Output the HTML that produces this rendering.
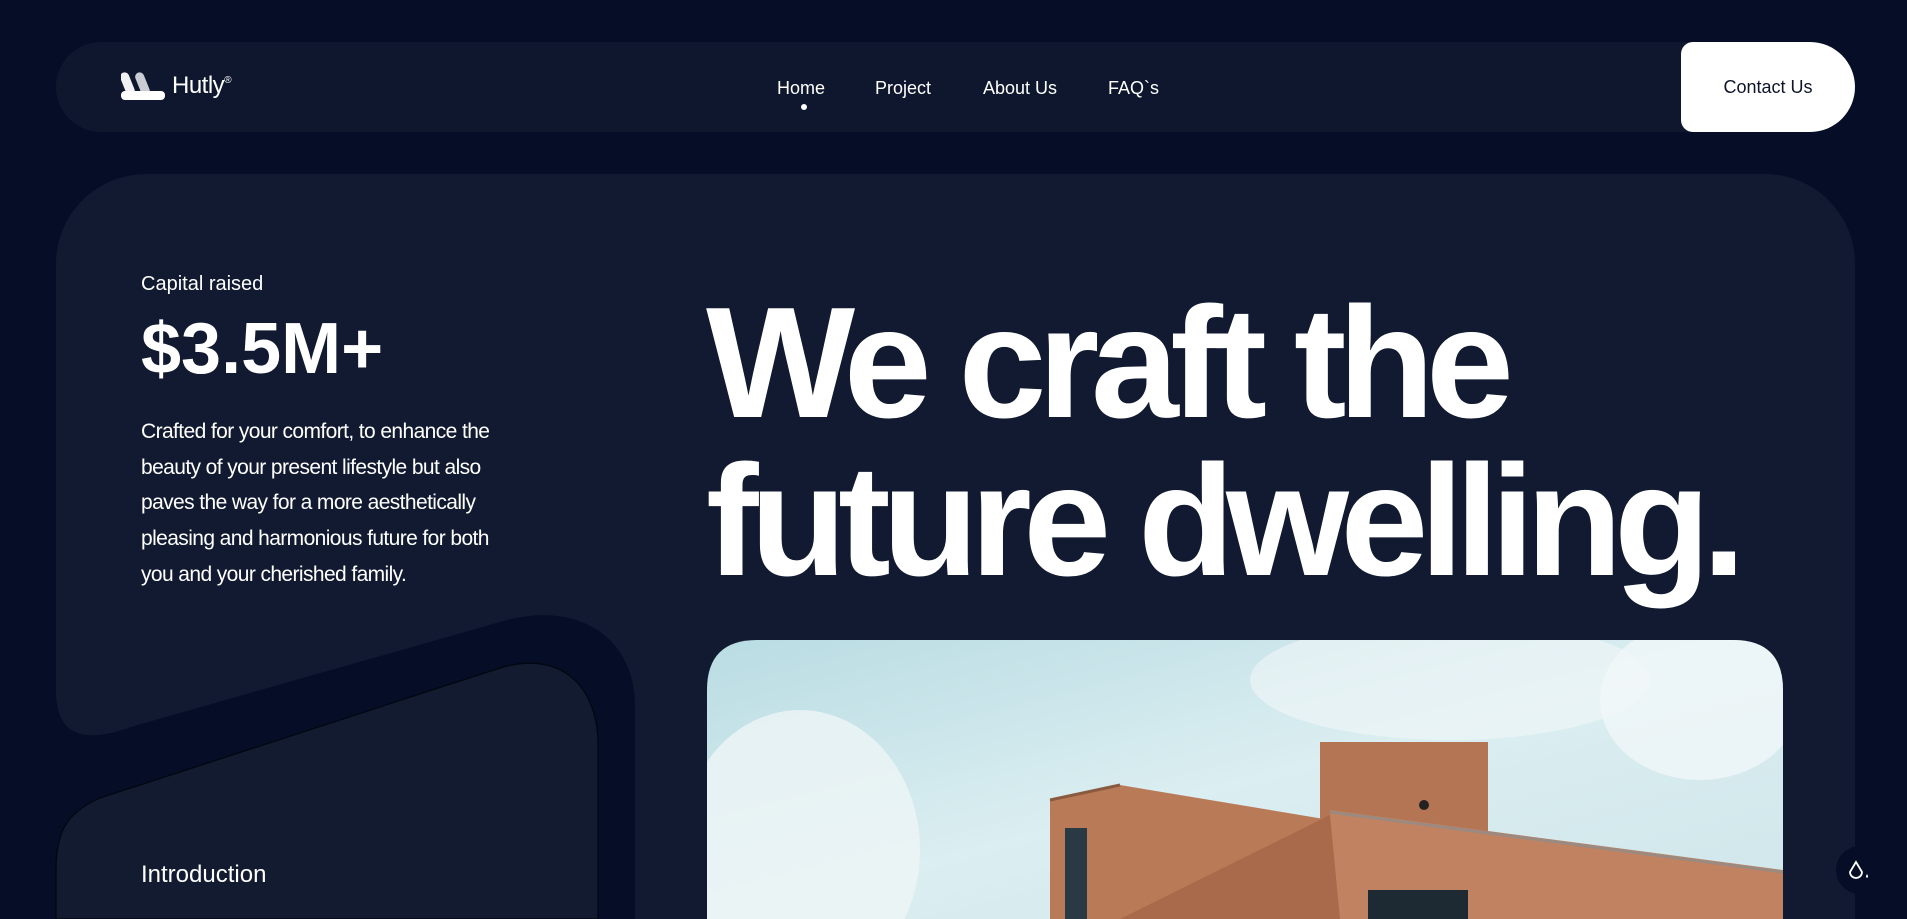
<!DOCTYPE html>
<html><head><meta charset="utf-8"><style>
*{margin:0;padding:0;box-sizing:border-box}
html,body{width:1907px;height:919px;overflow:hidden;background:#050e26;font-family:"Liberation Sans",sans-serif;color:#fff}
#w{position:relative;width:1907px;height:919px;overflow:hidden}
.nav{position:absolute;left:56px;top:42px;width:1680px;height:90px;background:#0e172d;border-radius:45px 0 0 45px}
.btn{position:absolute;left:1681px;top:42px;width:174px;height:90px;background:#fff;border-radius:12px 45px 45px 12px;color:#0e1529;font-size:18px;display:flex;align-items:center;justify-content:center}
.logo{position:absolute;left:121px;top:72px;display:flex;align-items:center}
.links a{position:absolute;top:78px;font-size:18px;color:#fff;text-decoration:none}
.dot{position:absolute;left:801px;top:104px;width:6px;height:6px;border-radius:50%;background:#fff}
.card{position:absolute;left:56px;top:174px;width:1799px;height:745px;background:#111a30;border-radius:90px 90px 0 0}
.abs{position:absolute}
</style></head><body><div id="w">
<div class="nav"></div>
<div class="logo">
<svg width="46" height="28" viewBox="0 0 46 28"><rect x="2" y="0" width="9" height="24" rx="4.5" fill="#f1f1f3" transform="rotate(-22 6 12)"/><rect x="17" y="0" width="9" height="24" rx="4.5" fill="#c9ccd3" transform="rotate(-22 21 12)"/><rect x="0" y="19" width="44" height="9" rx="4" fill="#fff"/></svg>
<span style="font-size:24px;margin-left:5px;letter-spacing:-0.5px">Hutly</span><sup style="font-size:10px;margin-top:-12px">®</sup>
</div>
<div class="links">
<a style="left:777px">Home</a><a style="left:875px">Project</a><a style="left:983px">About Us</a><a style="left:1108px">FAQ`s</a>
</div>
<div class="dot"></div>
<div class="btn">Contact Us</div>
<div class="card"></div>
<div class="abs" style="left:141px;top:273px;font-size:20px">Capital raised</div>
<div class="abs" style="left:141px;top:308px;font-size:72px;font-weight:700;line-height:82px">$3.5M+</div>
<div class="abs" style="left:141px;top:414px;width:385px;font-size:21px;line-height:35.7px;letter-spacing:-0.6px">Crafted for your comfort, to enhance the beauty of your present lifestyle but also paves the way for a more aesthetically pleasing and harmonious future for both you and your cherished family.</div>
<div class="abs" style="left:706px;top:284px;font-size:158px;font-weight:700;line-height:158px;letter-spacing:-8.5px;white-space:nowrap">We craft the<br>future dwelling.</div>
<svg class="abs" style="left:0;top:0" width="1907" height="919">
<path d="M56,690 C56,745 95,740 134,726 L500,622 C580,598 635,640 635,705 L635,919 L56,919 Z" fill="#050e26"/>
<path d="M56,919 L56,870 C56,830 68,812 100,798 L500,668 C560,650 598,685 598,745 L598,919 Z" fill="#121b30" stroke="#02060f" stroke-width="1.2"/>
<defs>
<linearGradient id="sky" x1="0" y1="0" x2="1" y2="1"><stop offset="0" stop-color="#b9dce3"/><stop offset="0.5" stop-color="#dbeef1"/><stop offset="1" stop-color="#cfe6ea"/></linearGradient>
<clipPath id="cp"><path d="M707,919 L707,690 Q707,640 757,640 L1733,640 Q1783,640 1783,690 L1783,919 Z"/></clipPath>
</defs>
<g clip-path="url(#cp)">
<rect x="707" y="640" width="1076" height="279" fill="url(#sky)"/>
<ellipse cx="800" cy="850" rx="120" ry="140" fill="#eef5f6" opacity=".8"/>
<ellipse cx="1450" cy="680" rx="200" ry="60" fill="#f2f7f8" opacity=".6"/>
<ellipse cx="1700" cy="700" rx="100" ry="80" fill="#f4f8f9" opacity=".7"/>
<rect x="1320" y="742" width="168" height="140" fill="#b37554"/>
<polygon points="1050,800 1120,785 1330,820 1330,919 1050,919" fill="#b97a58"/>
<polygon points="1330,810 1783,870 1783,919 1330,919" fill="#c08261"/>
<polygon points="1120,919 1330,815 1340,919" fill="#a86a4a"/>
<rect x="1065" y="828" width="22" height="91" fill="#2a3a44"/>
<rect x="1368" y="890" width="100" height="29" fill="#1e2a33"/>
<circle cx="1424" cy="805" r="5" fill="#222"/>
<line x1="1050" y1="800" x2="1120" y2="785" stroke="#8a5a40" stroke-width="3"/>
<line x1="1330" y1="812" x2="1783" y2="872" stroke="#9a8a80" stroke-width="3"/>
</g>
<circle cx="1860" cy="870" r="24" fill="#050e26"/>
<path d="M1856,862 L1850,872 A6,6 0 0 0 1862,872 Z" fill="none" stroke="#fff" stroke-width="1.8"/>
<path d="M1867,874 q-2,3 0,4 q2,-1 0,-4z" fill="#fff"/>
</svg>
<div class="abs" style="left:141px;top:861px;font-size:24px">Introduction</div>
</div></body></html>
